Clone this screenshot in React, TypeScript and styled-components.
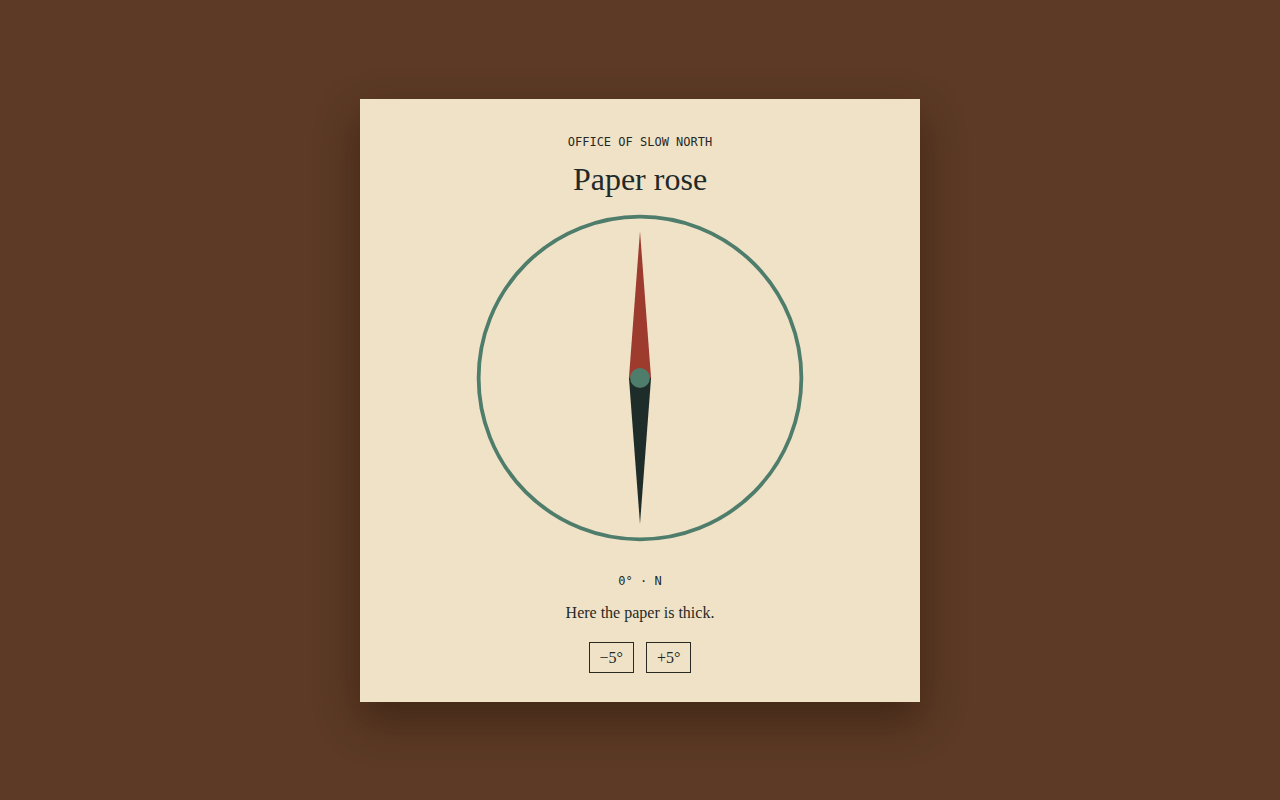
import React, { useState } from "react";
import styled, { createGlobalStyle } from "styled-components";

const Global = createGlobalStyle`
  html, body { margin: 0; padding: 0; height: 100%; }
  body { background: #5c3a25; }
  #root { height: 100%; }
`;

const Page = styled.div`
  height: 100vh;
  display: flex;
  align-items: center;
  justify-content: center;
`;

const Card = styled.main`
  width: 560px;
  box-sizing: border-box;
  background: #f0e2c7;
  padding: 35px 0 29px;
  display: flex;
  flex-direction: column;
  align-items: center;
  color: #1f2a28;
  box-shadow: 0 18px 40px rgba(30, 15, 5, 0.45);
`;

const Eyebrow = styled.div`
  font-family: "DejaVu Sans Mono", monospace;
  font-size: 12px;
  line-height: 16px;
`;

const Title = styled.h1`
  margin: 10px 0 0;
  font-family: "Liberation Serif", serif;
  font-weight: 400;
  font-size: 32px;
  line-height: 38px;
`;

const Dial = styled.svg`
  display: block;
  margin-top: 15px;
  width: 330px;
  height: 330px;
`;

const Reading = styled.div`
  margin-top: 30px;
  font-family: "DejaVu Sans Mono", monospace;
  font-size: 12px;
  line-height: 16px;
`;

const Note = styled.p`
  margin: 14px 0 0;
  font-family: "Liberation Serif", serif;
  font-size: 16px;
  line-height: 20px;
`;

const Controls = styled.div`
  margin-top: 19px;
  display: flex;
  gap: 12px;
`;

const Step = styled.button`
  font-family: "Liberation Serif", serif;
  font-size: 16px;
  line-height: 19px;
  padding: 5px 10px;
  background: transparent;
  color: #1f2a28;
  border: 1px solid #2a2a22;
  border-radius: 0;
  cursor: pointer;
`;

const dirs = ["N", "NE", "E", "SE", "S", "SW", "W", "NW"];

export default function App() {
  const [deg, setDeg] = useState(0);
  const norm = ((deg % 360) + 360) % 360;
  const dir = dirs[Math.round(norm / 45) % 8];
  return (
    <>
      <Global />
      <Page>
        <Card>
          <Eyebrow>OFFICE OF SLOW NORTH</Eyebrow>
          <Title>Paper rose</Title>
          <Dial viewBox="0 0 200 200">
            <circle cx="100" cy="100" r="97.8" fill="none" stroke="#4f7d6b" strokeWidth="2.3" />
            <g transform={`rotate(${norm} 100 100)`}>
              <polygon points="100,11 106.7,100 93.3,100" fill="#9c3b2e" />
              <polygon points="100,188.5 106.7,100 93.3,100" fill="#1f2d2a" />
              <circle cx="100" cy="100" r="6" fill="#4f7d6b" />
            </g>
          </Dial>
          <Reading>{`${norm}° · ${dir}`}</Reading>
          <Note>Here the paper is thick.</Note>
          <Controls>
            <Step onClick={() => setDeg(deg - 5)}>−5°</Step>
            <Step onClick={() => setDeg(deg + 5)}>+5°</Step>
          </Controls>
        </Card>
      </Page>
    </>
  );
}
